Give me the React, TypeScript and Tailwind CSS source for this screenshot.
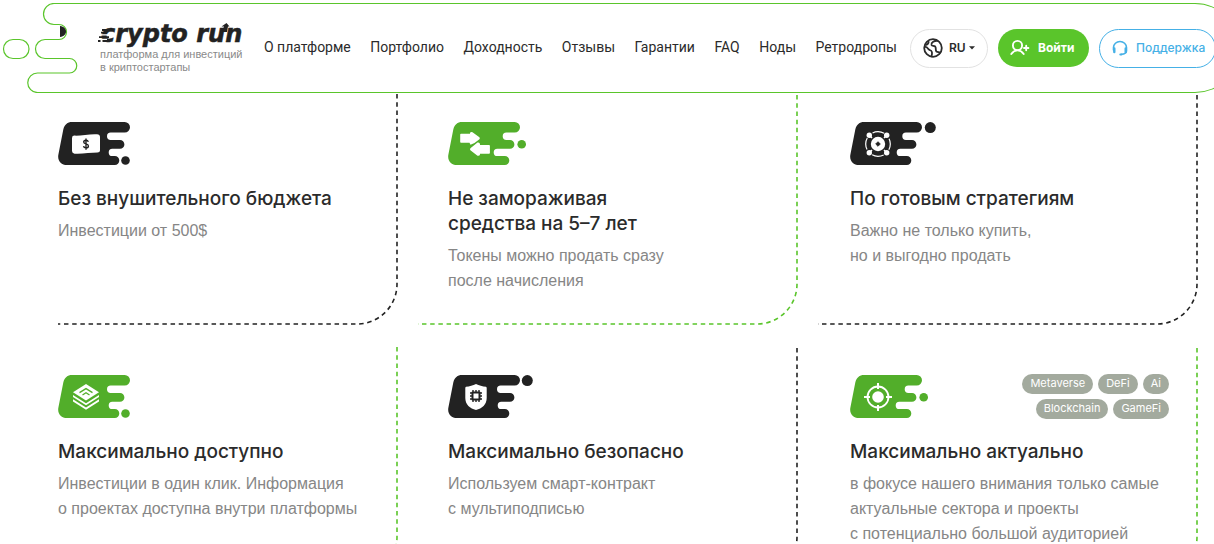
import type { ReactNode } from 'react';

const navItems = ['О платформе', 'Портфолио', 'Доходность', 'Отзывы', 'Гарантии', 'FAQ', 'Ноды', 'Ретродропы'];

type BadgeShape = {
  notch1: number;
  notch2: number;
  dot: [number, number, number];
};

const shapes: Record<string, BadgeShape> = {
  low: { notch1: 49, notch2: 50.7, dot: [67.5, 38.5, 4.3] },
  middle: { notch1: 54.7, notch2: 45.7, dot: [73.7, 22.3, 4.3] },
  high: { notch1: 52.3, notch2: 46.7, dot: [80.3, 5.6, 5.5] },
  highNear: { notch1: 49, notch2: 49.7, dot: [79.3, 5.6, 5.5] },
};

function Badge({ shape, dark, children }: { shape: BadgeShape; dark: boolean; children: ReactNode }) {
  const { notch1, notch2, dot } = shape;
  const d = `M14 0H66.7a5.3 5.3 0 0 1 0 10.6H${notch1 + 3.7}a3.7 3.7 0 0 0 0 7.4H62a4.4 4.4 0 0 1 0 8.8H${
    notch2 + 3.6
  }a3.6 3.6 0 0 0 0 7.2H56.8a4.5 4.5 0 0 1 0 9H9C3 43 -0.8 38.500 0.400 32.500L5.300 7.500C6.500 2.500 9.500 0 14 0Z`;
  return (
    <svg
      width="88"
      height="43"
      viewBox="0 0 88 43"
      aria-hidden="true"
      className={dark ? 'shrink-0 text-[#222222]' : 'shrink-0 text-[#52ae2a]'}
    >
      <path d={d} fill="currentColor" />
      <circle cx={dot[0]} cy={dot[1]} r={dot[2]} fill="currentColor" />
      {children}
    </svg>
  );
}

const banknote = (
  <>
    <path d="M16.500 13.600C23 13.900 32 11.800 39 12.300Q42 12.600 42 15V28.500Q42 30.500 39.500 30.600C33 30.600 23 32.300 16.500 31.700Q14 31.300 14 29V16Q14 13.600 16.500 13.600Z" fill="#fff" />
    <path d="M30.300 19.800C30 18.600 29.200 18.200 28 18.200C26.600 18.200 25.700 18.900 25.700 20C25.700 22.600 30.400 21.200 30.400 24C30.400 25.200 29.400 25.900 28 25.900C26.700 25.900 25.700 25.300 25.500 24.200M28 16.400V27.700" fill="none" stroke="currentColor" strokeWidth="1.4" />
  </>
);

const arrows = (
  <g fill="#fff">
    <path d="M13 11.800H22V11Q22.500 9.600 24.500 10.200L31.400 15.200Q32.300 16.200 31.400 17.200L26.500 21L22.500 22.800L21.500 20.700H13Q12.200 20.700 12.200 20V12.500Q12.200 11.800 13 11.800Z" />
    <path d="M41 23H32V22Q31.500 20 29.500 20.600L22.400 26.200Q21.600 27.300 22.400 28.300L29.500 33.700Q31.500 34.300 32 32.500V31.800H41Q41.900 31.800 41.900 31V23.800Q41.900 23 41 23Z" />
  </g>
);

const orbit = (
  <>
    <circle cx="28" cy="22" r="12.300" fill="none" stroke="#fff" strokeWidth="1.200" strokeDasharray="12 7.320" strokeDashoffset="6" />
    <g fill="#fff">
      <circle cx="19.300" cy="13.300" r="2.700" />
      <circle cx="36.700" cy="13.300" r="2.700" />
      <circle cx="19.300" cy="30.700" r="2.700" />
      <circle cx="36.700" cy="30.700" r="2.700" />
      <path d="M19.300 13.300L22 16M36.700 13.300L34 16M19.300 30.700L22 28M36.700 30.700L34 28" stroke="#fff" strokeWidth="1.500" />
    </g>
    <circle cx="28" cy="22" r="7.200" fill="#fff" />
    <path d="M28 19.700L30.300 22L28 24.300L25.700 22Z" fill="currentColor" stroke="currentColor" strokeWidth="0.800" />
  </>
);

const layers = (
  <>
    <path d="M28 9L41 17.200L28 25.500L15 17.200Z" fill="#fff" />
    <path d="M15 20L28 28.300L41 20V22L28 30.300L15 22ZM15 24.200L28 32.500L41 24.200V26.500L28 34.800L15 26.500Z" fill="#fff" />
    <path d="M21.500 17.600L28 13.600L34.500 17.600M24.500 20L28 17.800L31.500 20" fill="none" stroke="currentColor" strokeWidth="1.300" />
  </>
);

const shield = (
  <>
    <path d="M28 9C31 10.500 34.500 11.500 38 11.700Q38.700 12 38.700 13V23C38.700 29.500 34 33.500 28 35C22 33.500 17.300 29.500 17.300 23V13Q17.300 12 18 11.700C21.500 11.500 25 10.500 28 9Z" fill="#fff" />
    <path d="M25 15V27M28 15V27M31 15V27M22 18H34M22 21H34M22 24H34" stroke="currentColor" strokeWidth="1.400" />
    <rect x="23.500" y="16.500" width="9" height="9" rx="1" fill="currentColor" />
    <rect x="25.500" y="18.500" width="5" height="5" fill="#fff" />
  </>
);

const target = (
  <>
    <circle cx="28" cy="22" r="10.500" fill="none" stroke="#fff" strokeWidth="1.800" />
    <circle cx="28" cy="22" r="5.800" fill="#fff" />
    <path d="M28 8V14M28 30V36M14 22H20M36 22H42" stroke="#fff" strokeWidth="2" />
  </>
);

type Card = {
  badge: BadgeShape;
  dark: boolean;
  icon: ReactNode;
  title: string[];
  text: string[];
  tags?: string[];
};

const cards: Card[] = [
  { badge: shapes.low, dark: true, icon: banknote, title: ['Без внушительного бюджета'], text: ['Инвестиции от 500$'] },
  { badge: shapes.middle, dark: false, icon: arrows, title: ['Не замораживая', 'средства на 5–7 лет'], text: ['Токены можно продать сразу', 'после начисления'] },
  { badge: shapes.high, dark: true, icon: orbit, title: ['По готовым стратегиям'], text: ['Важно не только купить,', 'но и выгодно продать'] },
  { badge: shapes.low, dark: false, icon: layers, title: ['Максимально доступно'], text: ['Инвестиции в один клик. Информация', 'о проектах доступна внутри платформы'] },
  { badge: shapes.highNear, dark: true, icon: shield, title: ['Максимально безопасно'], text: ['Используем смарт-контракт', 'с мультиподписью'] },
  {
    badge: shapes.middle,
    dark: false,
    icon: target,
    title: ['Максимально актуально'],
    text: ['в фокусе нашего внимания только самые', 'актуальные сектора и проекты', 'с потенциально большой аудиторией'],
    tags: ['Metaverse', 'DeFi', 'Ai', 'Blockchain', 'GameFi'],
  },
];

const columnPadding = ['pl-0', 'pl-[30px]', 'pl-8'];

function Lines({ lines }: { lines: string[] }) {
  return (
    <>
      {lines.map((line) => (
        <span key={line} className="block whitespace-nowrap">
          {line}
        </span>
      ))}
    </>
  );
}

function FeatureCard({ card, column }: { card: Card; column: number }) {
  return (
    <article className={`relative min-h-[233px] overflow-hidden pt-[30px] pr-[29px] ${columnPadding[column]}`}>
      <svg className="pointer-events-none absolute inset-0 h-full w-full" aria-hidden="true">
        <rect
          x="-100"
          y="-100"
          rx="40"
          fill="none"
          strokeWidth="1.6"
          strokeDasharray="4.5 3.7"
          className={`h-[calc(100%+99px)] w-[calc(100%+99px)] ${card.dark ? 'stroke-[#222222]' : 'stroke-[#5ac52b]'}`}
        />
      </svg>
      <div className="flex h-[43px] items-center justify-between">
        <Badge shape={card.badge} dark={card.dark}>
          {card.icon}
        </Badge>
        {card.tags && (
          <ul className="flex max-w-[150px] flex-wrap justify-end gap-[5px]">
            {card.tags.map((tag) => (
              <li key={tag} className="h-5 rounded-full bg-[#a3aa9e] px-2 text-[11px] leading-[19px] text-white">
                {tag}
              </li>
            ))}
          </ul>
        )}
      </div>
      <h2 className="mt-[21px] text-[19px] leading-[25px] font-medium text-[#2b2b2b]">
        <Lines lines={card.title} />
      </h2>
      <p className="mt-[7px] font-['Liberation_Sans',Arial,sans-serif] text-base leading-[25px] text-[#868686]">
        <Lines lines={card.text} />
      </p>
    </article>
  );
}

function Logo() {
  return (
    <a href="#" className="flex w-[146px] shrink-0 flex-col pb-[3px] whitespace-nowrap">
      <span className="relative pl-[3px] font-['DejaVu_Sans',sans-serif] text-2xl leading-7 font-bold text-[#222222] italic [-webkit-text-stroke:0.5px_#222222]">
        crypto run
        <svg className="absolute top-0 left-0" width="146" height="28" viewBox="0 0 146 28" aria-hidden="true">
          <path d="M0 14.800H11M0 19.500H9" stroke="#fff" strokeWidth="1.300" />
          <path d="M4 10H13M3 12.700H9M1 17.200H11M0 21H2.500M4.500 21H10" stroke="#222222" strokeWidth="1.800" />
          <path d="M124 12L126 6.500H123.500L128.500 3L131.500 6.500H130L129 12Z" fill="#222222" />
        </svg>
      </span>
      <span className="pl-0.5 font-['Liberation_Sans',Arial,sans-serif] text-[11px] leading-[13px] text-[#8a8a8a]">
        платформа для инвестиций
        <br />в криптостартапы
      </span>
    </a>
  );
}

function Header() {
  return (
    <header className="relative z-10 flex overflow-x-clip pt-[3px]">
      <svg width="80" height="90" viewBox="0 3 80 90" className="shrink-0" fill="none" aria-hidden="true">
        <path
          d="M80 3.500H54A10.500 10.500 0 0 0 54 24.500H59A7.500 7.500 0 0 1 59 39.500H45A9.500 9.500 0 0 0 45 58.500H69.500A7.250 7.250 0 0 1 69.500 73H37.500A9.750 9.750 0 0 0 37.500 92.500H80"
          stroke="#5ac52b"
          strokeWidth="1.2"
        />
        <rect x="3.500" y="39.500" width="25.500" height="19" rx="9.500" stroke="#5ac52b" strokeWidth="1.200" />
        <path d="M60 26C64 26.500 66 29 66 31.500S64 36.500 60 37Z" fill="#222222" />
      </svg>
      <div className="-mr-[26px] flex h-[90px] flex-1 items-center rounded-r-[45px] border-y border-r border-[#5ac52b] bg-white pr-[23px] pl-[18px]">
        <Logo />
        <nav className="mr-[13px] ml-5 flex flex-1 justify-between pb-0.5 font-[Roboto,sans-serif] text-sm whitespace-nowrap text-[#2b2b2b]">
          {navItems.map((item) => (
            <a key={item} href="#">
              {item}
            </a>
          ))}
        </nav>
        <div className="flex shrink-0 gap-2.5 text-xs">
          <button type="button" className="flex h-[39px] w-[78px] items-center rounded-full border border-[#e2e2e2] pl-3 font-semibold text-[#2b2b2b]">
            <svg width="20" height="20" viewBox="0 0 20 20" fill="none" stroke="currentColor" strokeWidth="1.800" strokeLinecap="round" strokeLinejoin="round" aria-hidden="true">
              <circle cx="10" cy="10" r="8.800" />
              <path d="M14.500 2.800C11.500 2.500 8 4.500 8.500 7C9 8.500 11 7.300 12.200 8.500C13.500 10 12 12 13.500 13.500C14.500 14.300 16 14 17 14.500" />
              <path d="M1.800 9C5 8.500 4.500 11.500 6.800 12C9.200 12.600 9.500 15 8.500 18.300M5.500 3.500C6 5 4.500 6.500 3 7" />
            </svg>
            <span className="ml-1.5">RU</span>
            <svg width="6" height="4" viewBox="0 0 6 4" className="ml-[3px]" aria-hidden="true">
              <path d="M0 0.300H6L3 3.500Z" fill="currentColor" />
            </svg>
          </button>
          <button type="button" className="flex h-[38px] w-[91px] items-center rounded-full bg-[#5ac52b] pl-3 font-bold text-white">
            <svg width="20" height="18" viewBox="0 0 20 18" fill="none" stroke="currentColor" strokeWidth="1.900" strokeLinecap="round" aria-hidden="true">
              <circle cx="7.500" cy="6.500" r="4.600" />
              <path d="M1.300 15C3 12.600 5.200 11.400 7.500 11.400S12 12.600 13.700 15M14 9H18.400M16.200 6.800V11.200" />
            </svg>
            <span className="ml-2">Войти</span>
          </button>
          <a href="#" className="flex h-[39px] w-[117px] items-center rounded-full border border-[#45b0e6] pl-3 font-medium text-[#45b0e6]">
            <svg width="16" height="16" viewBox="0 0 16 16" fill="none" stroke="currentColor" strokeWidth="1.600" strokeLinecap="round" aria-hidden="true">
              <path d="M1.500 10V7.500A6.500 6 0 0 1 14.500 7.500V11Q14.300 14 9.500 14.300" />
              <path d="M2.300 8.500V12M13.700 8.500V12" strokeWidth="2.400" />
              <path d="M8.300 14.500H9.500" strokeWidth="2" />
            </svg>
            <span className="ml-2">Поддержка</span>
          </a>
        </div>
      </div>
    </header>
  );
}

export default function App() {
  return (
    <div className="bg-white font-[Inter,sans-serif]">
      <Header />
      <main className="-mt-px grid grid-cols-[340fr_380fr_380fr] gap-5 pr-4 pl-[58px]">
        {cards.map((card, index) => (
          <FeatureCard key={card.title[0]} card={card} column={index % 3} />
        ))}
      </main>
    </div>
  );
}
